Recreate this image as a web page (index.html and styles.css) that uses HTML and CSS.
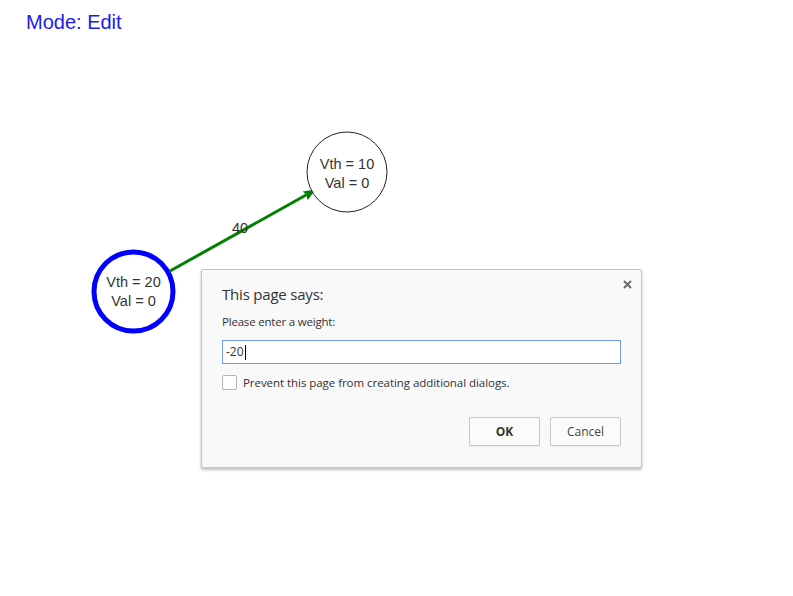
FILE: index.html
```html
<!DOCTYPE html>
<html>
<head>
<meta charset="utf-8">
<link rel="stylesheet" href="styles.css">
</head>
<body>
<div class="page">
  <div class="mode">Mode: Edit</div>
  <svg class="canvas" width="793" height="562" viewBox="0 0 793 562">
    <line x1="170" y1="237" x2="306.5" y2="160.8" class="edge"/>
    <polygon class="arrowhead" points="315.6,155.6 302.7,157.4 306.5,160.8 307.6,166.2"/>
    <text x="240" y="198.5" class="edge-label">40</text>
    <circle cx="133.5" cy="257.5" r="39.5" class="node selected"/>
    <text x="133.5" y="253" class="node-label">Vth = 20</text>
    <text x="133.5" y="272" class="node-label">Val = 0</text>
    <circle cx="347" cy="138" r="40" class="node"/>
    <text x="347" y="135" class="node-label">Vth = 10</text>
    <text x="347" y="154" class="node-label">Val = 0</text>
  </svg>
  <div class="dialog">
    <button class="close" aria-label="Close">
      <svg width="9" height="9" viewBox="0 0 9 9"><path d="M1 1 L8 8 M8 1 L1 8"/></svg>
    </button>
    <div class="title">This page says:</div>
    <div class="message">Please enter a weight:</div>
    <div class="input">-20<span class="caret"></span></div>
    <label class="check"><span class="box"></span>Prevent this page from creating additional dialogs.</label>
    <div class="buttons">
      <button class="btn ok">OK</button>
      <button class="btn">Cancel</button>
    </div>
  </div>
</div>
</body>
</html>
```
FILE: styles.css
```css
html, body {
  margin: 0;
  padding: 0;
  background: #fff;
}
.page {
  position: relative;
  width: 793px;
  height: 596px;
  overflow: hidden;
}
.mode {
  font-family: "Liberation Sans", Arial, sans-serif;
  font-size: 20px;
  line-height: 23px;
  color: #1a1aee;
  padding: 11px 0 0 26px;
}
.canvas {
  display: block;
}
.edge {
  stroke: #008000;
  stroke-width: 3;
}
.arrowhead {
  fill: #008000;
}
.edge-label, .node-label {
  font-family: "Liberation Sans", Arial, sans-serif;
  font-size: 14.5px;
  fill: #333;
  text-anchor: middle;
}
.node {
  fill: #fff;
  stroke: #222;
  stroke-width: 1;
}
.node.selected {
  stroke: #0000ff;
  stroke-width: 5;
}
.dialog {
  position: absolute;
  left: 201px;
  top: 269px;
  width: 399px;
  height: 163px;
  padding: 14px 20px 20px 20px;
  background: #f9f9f9;
  border: 1px solid #c4c4c4;
  border-radius: 2px;
  box-shadow: 0 2px 3px rgba(0,0,0,0.25);
  font-family: "Open Sans", "Noto Sans", sans-serif;
  color: #333;
  display: flex;
  flex-direction: column;
}
.close {
  position: absolute;
  right: 9px;
  top: 10px;
  width: 9px;
  height: 9px;
  padding: 0;
  border: 0;
  background: none;
}
.close svg {
  display: block;
}
.close path {
  stroke: #6a6a6a;
  stroke-width: 2;
}
.title {
  font-size: 15px;
  line-height: 20px;
  letter-spacing: -0.2px;
}
.message {
  font-size: 11.5px;
  line-height: 16px;
  margin-top: 10px;
  letter-spacing: -0.2px;
}
.input {
  margin-top: 10px;
  height: 22px;
  border: 1px solid #6b9cf0;
  background: #fff;
  font-size: 12px;
  line-height: 22px;
  padding-left: 3px;
  display: flex;
  align-items: center;
}
.caret {
  display: inline-block;
  width: 1px;
  height: 15px;
  background: #000;
  margin-left: 1px;
}
.check {
  margin-top: 11px;
  display: flex;
  align-items: center;
  font-size: 11.5px;
  line-height: 15px;
  letter-spacing: -0.05px;
}
.box {
  width: 13px;
  height: 13px;
  border: 1px solid #b4b4b4;
  border-radius: 2px;
  background: #fff;
  margin-right: 6px;
}
.buttons {
  margin-top: auto;
  display: flex;
  justify-content: flex-end;
  gap: 10px;
  margin-bottom: 1px;
}
.btn {
  width: 71px;
  height: 29px;
  border: 1px solid #c6c6c6;
  border-radius: 2px;
  background: #fbfbfb;
  font-family: "Open Sans", "Noto Sans", sans-serif;
  font-size: 12px;
  color: #444;
  padding: 0;
  box-shadow: 0 1px 0 rgba(0,0,0,0.06);
}
.btn.ok {
  font-weight: bold;
  color: #333;
}
```
